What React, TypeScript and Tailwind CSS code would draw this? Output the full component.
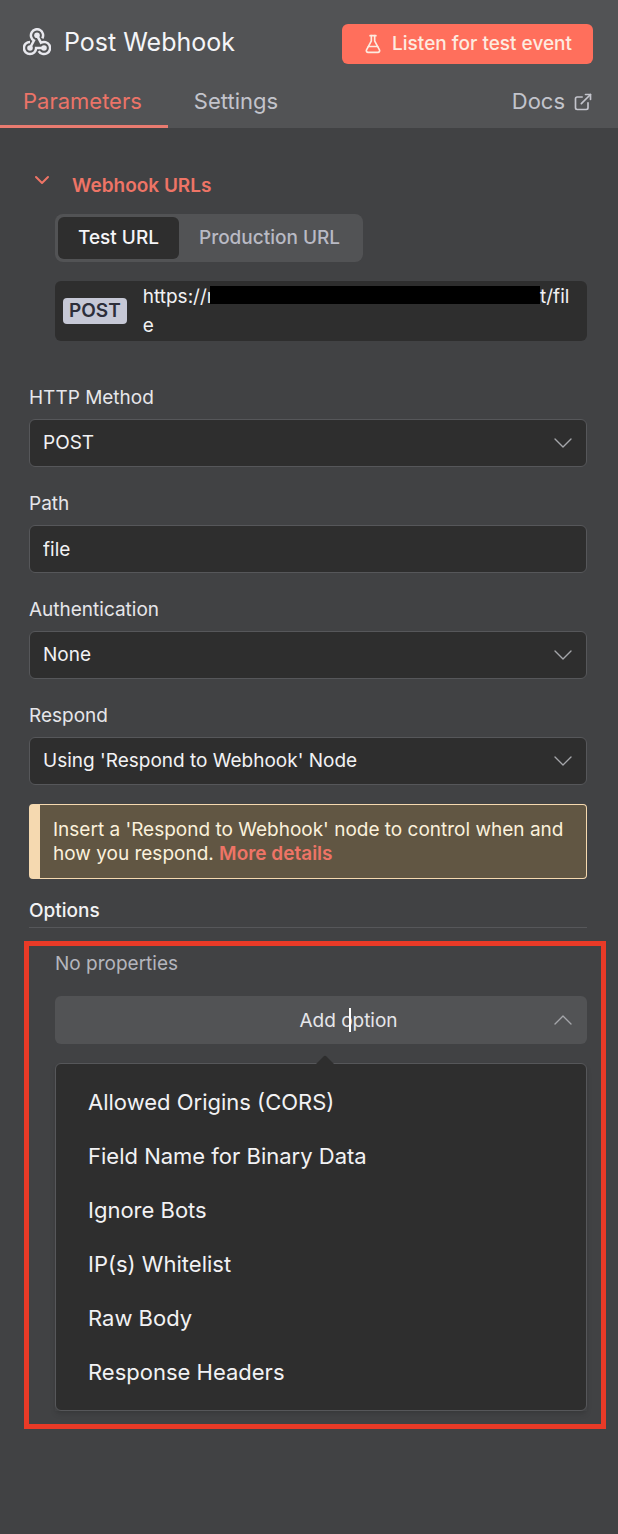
import { useState } from "react";
import type { ReactNode } from "react";
import { ChevronDown, ChevronUp, ExternalLink, FlaskConical } from "lucide-react";

const addableOptions = [
  "Allowed Origins (CORS)",
  "Field Name for Binary Data",
  "Ignore Bots",
  "IP(s) Whitelist",
  "Raw Body",
  "Response Headers",
];

const fieldClass =
  "block w-full h-12 px-[13px] rounded-md border border-[#56575a] bg-[#2e2e2e] text-[19px] text-[#f2f2f4] outline-none";

const WebhookIcon = () => (
  <svg viewBox="0 0 28 28" className="size-7 shrink-0" fill="none" stroke="#e8e8ee" strokeWidth="2.5" aria-hidden="true">
    <path d="M7 20L10.95 12.6A6.1 6.1 0 1 1 19.3 10.35" />
    <path d="M14 7.3L17.95 14.7A6.1 6.1 0 1 1 15.7 23.05" />
    <path d="M21 20H13.1A6.1 6.1 0 1 1 7 13.9" />
    <g fill="#e8e8ee" stroke="none">
      <circle cx="14" cy="7.3" r="2.8" />
      <circle cx="7" cy="20" r="2.8" />
      <circle cx="21" cy="20" r="2.8" />
    </g>
  </svg>
);

const Field = ({ id, label, children }: { id: string; label: string; children: ReactNode }) => (
  <div>
    <label htmlFor={id} className="block mb-[9px] text-[19px] leading-6 text-[#e6e6ea]">
      {label}
    </label>
    {children}
  </div>
);

const SelectField = ({ id, label, options }: { id: string; label: string; options: string[] }) => (
  <Field id={id} label={label}>
    <div className="relative">
      <select id={id} className={`${fieldClass} appearance-none`}>
        {options.map((option) => (
          <option key={option}>{option}</option>
        ))}
      </select>
      <ChevronDown
        className="absolute right-2 top-2 size-8 text-[#a5a6aa] pointer-events-none"
        strokeWidth={1}
      />
    </div>
  </Field>
);

const Header = () => (
  <header className="bg-[#525355]">
    <div className="flex items-start justify-between pt-6 pl-[23px] pr-[25px]">
      <div className="flex items-center gap-[13px]">
        <WebhookIcon />
        <h1 className="text-[25px] leading-9 text-[#f5f5f8]">Post Webhook</h1>
      </div>
      <button className="flex items-center gap-[9px] h-10 px-[21px] rounded-md bg-[#ff6f5c] text-[19px] font-medium text-[#fdebe0]">
        <FlaskConical className="size-5" strokeWidth={2} />
        Listen for test event
      </button>
    </div>
    <nav className="flex h-16 pr-[25px] text-[22px] text-[#c3c4cc]">
      <button className="pl-[23px] pr-[26px] pt-[14px] border-b-3 border-[#e97b70] text-[#ec7468]">
        Parameters
      </button>
      <button className="px-[26px] pt-[14px] border-b-3 border-transparent">Settings</button>
      <a href="#docs" className="ml-auto flex items-center gap-2 pt-[14px] pb-[3px]">
        Docs
        <ExternalLink className="size-5" strokeWidth={2} />
      </a>
    </nav>
  </header>
);

const WebhookUrls = () => {
  const [mode, setMode] = useState("Test URL");

  return (
    <section className="pt-[46px] pr-[31px]">
      <h2>
        <button className="flex items-start gap-[18px] pl-[30px] text-[19px] leading-6 font-semibold text-[#ee7466]">
          <ChevronDown className="size-6 -mt-1.5" />
          Webhook URLs
        </button>
      </h2>

      <div className="ml-[55px] mt-4">
        <div className="flex w-fit p-[3px] rounded-lg bg-[#525355]">
          {["Test URL", "Production URL"].map((name) => (
            <button
              key={name}
              onClick={() => setMode(name)}
              className={`h-[42px] px-5 rounded-md text-[19px] font-medium ${
                mode === name ? "bg-[#2e2e2e] text-[#f5f5f8]" : "text-[#b9bac4]"
              }`}
            >
              {name}
            </button>
          ))}
        </div>

        <div className="mt-[19px] flex items-center gap-4 rounded-md bg-[#2e2e2e] pl-2 pr-4 h-[60px]">
          <span className="rounded-sm bg-[#c6c8d6] px-1.5 text-[19px] leading-[26px] font-semibold text-[#2d2e3a]">
            POST
          </span>
          <p className="min-w-0 text-[19px] leading-[29px] text-[#f2f2f4] break-all">
            https://n
            <span className="inline-block align-[-1px] -ml-2 w-[330px] h-[18px] bg-black" />
            t/file
          </p>
        </div>
      </div>
    </section>
  );
};

const AddOption = () => (
  <div className="ml-6 mr-3 mt-[13px] border-5 border-[#e93a27] pt-1.5 pb-[13px] pl-[26px] pr-[14px]">
    <p className="text-[19px] leading-6 text-[#b4b5bd]">No properties</p>

    <div className="relative mt-5">
      <input
        type="text"
        role="combobox"
        aria-expanded="true"
        aria-controls="option-list"
        aria-label="Add option"
        placeholder="Add option"
        className="block w-full h-12 pl-[55px] rounded-md bg-[#525355] text-center text-[19px] text-[#f2f2f4] placeholder:text-[#e6e6ea] outline-none"
      />
      <span className="absolute left-[294px] top-3 w-0.5 h-6 bg-white" />
      <ChevronUp
        className="absolute right-2 top-2 size-8 text-[#a5a6aa] pointer-events-none"
        strokeWidth={1}
      />
    </div>

    <div className="relative mt-[19px] shadow-md">
      <svg viewBox="0 0 18 9" className="absolute left-[261px] -top-2 w-[18px] h-[9px]" aria-hidden="true">
        <path d="M0 9L7.5 1.5Q9 0 10.5 1.5L18 9Z" fill="#2e2e2e" />
      </svg>
      <ul id="option-list" className="py-[11px] rounded-md border border-[#56575a] bg-[#2e2e2e]">
        {addableOptions.map((option) => (
          <li key={option}>
            <button className="block w-full h-[54px] px-8 text-left text-[22px] text-[#f2f2f4]">
              {option}
            </button>
          </li>
        ))}
      </ul>
    </div>
  </div>
);

const App = () => (
  <div className="min-h-screen bg-[#414244] font-['Inter',sans-serif]">
    <Header />
    <main>
      <WebhookUrls />

      {/* Node parameters */}
      <div className="flex flex-col gap-[25px] mt-[45px] ml-[29px] mr-[31px]">
        <SelectField id="method" label="HTTP Method" options={["POST", "GET", "PUT", "DELETE"]} />
        <Field id="path" label="Path">
          <input id="path" type="text" defaultValue="file" className={fieldClass} />
        </Field>
        <SelectField id="auth" label="Authentication" options={["None", "Basic Auth", "Header Auth"]} />
        <SelectField
          id="respond"
          label="Respond"
          options={["Using 'Respond to Webhook' Node", "Immediately", "When Last Node Finishes"]}
        />
      </div>

      {/* Notice */}
      <div className="mt-[19px] ml-[29px] mr-[31px] rounded-sm border border-l-[11px] border-[#f5d9b0] bg-[#615643] pl-[13px] pr-3 pt-[13px] pb-3 text-[19px] leading-6 text-[#fbf1dc]">
        Insert a 'Respond to Webhook' node to control when and how you respond.{" "}
        <a href="#details" className="font-semibold text-[#ee7466]">
          More details
        </a>
      </div>

      <h2 className="mt-5 ml-[29px] mr-[31px] pb-1 border-b border-[#56575a] text-[19px] leading-6 font-medium text-[#f2f2f4]">
        Options
      </h2>

      <AddOption />
    </main>
  </div>
);

export default App;
